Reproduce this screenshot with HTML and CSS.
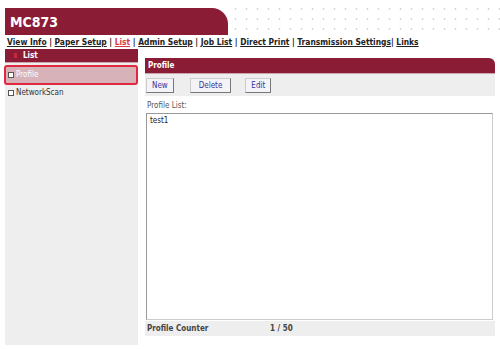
FILE: index.html
```html
<!DOCTYPE html>
<html lang="en">
<head>
  <meta charset="UTF-8">
  <title>MC873</title>
  <link rel="stylesheet" href="styles.css">
</head>
<body>
  <div class="top">
    <div class="banner">MC873</div>
    <div class="dots"></div>
  </div>

  <!-- menu -->
  <div class="nav">
    <a href="#">View Info</a> | <a href="#">Paper Setup</a> | <a href="#" class="cur">List</a> | <a href="#">Admin Setup</a> | <a href="#">Job List</a> | <a href="#">Direct Print</a> | <a href="#">Transmission Settings</a>| <a href="#">Links</a>
  </div>

  <div class="page">
    <div class="side">
      <div class="side-title"><span class="mark"></span>List</div>
      <div class="side-item selected"><span class="box"></span>Profile</div>
      <div class="side-item"><span class="box"></span>NetworkScan</div>
    </div>

    <div class="main">
      <div class="main-title">Profile</div>
      <div class="toolbar">
        <button>New</button>
        <button>Delete</button>
        <button>Edit</button>
      </div>
      <div class="label">Profile List:</div>
      <div class="listbox">
        <div>test1</div>
      </div>
      <div class="counter">
        <span class="c-name">Profile Counter</span>
        <span>1 / 50</span>
      </div>
    </div>
  </div>
</body>
</html>
```
FILE: styles.css
```css
body {
  margin: 0;
  font-family: 'DejaVu Sans Condensed', 'DejaVu Sans', Verdana, sans-serif;
  font-size: 8px;
  color: #333;
  background: #fff;
}

.top {
  display: flex;
  height: 35px;
}

.banner {
  width: 223px;
  height: 27px;
  margin: 8px 0 0 5px;
  background: #8b1c35;
  border-top-right-radius: 16px;
  color: #fff;
  font-size: 14px;
  font-weight: bold;
  line-height: 28px;
  padding-left: 5px;
  box-sizing: border-box;
}

.dots {
  flex: 1;
  margin: 4px 0 0 2px;
  background-image: radial-gradient(circle, #d6d6d6 0.8px, transparent 1.2px);
  background-size: 11px 10px;
}

.nav {
  padding: 2px 0 0 7px;
  height: 12px;
  font-weight: bold;
  font-size: 8.4px;
  color: #222;
  white-space: nowrap;
}

.nav a {
  color: #222;
  text-decoration: underline;
}

.nav a.cur {
  color: #d83a4a;
}

.page {
  display: flex;
}

.side {
  width: 133px;
  margin-left: 5px;
  height: 296px;
  background: #eeeeee;
}

.side-title {
  background: #8b1c35;
  color: #fff;
  font-weight: bold;
  height: 13px;
  line-height: 13px;
  padding-left: 9px;
  display: flex;
  align-items: center;
  border-bottom: 1px solid #c9a5ad;
}

.mark {
  width: 3px;
  height: 5px;
  background: #c8283c;
  margin-right: 6px;
}

.side-item {
  height: 16px;
  line-height: 16px;
  padding-left: 3px;
  display: flex;
  align-items: center;
  color: #333;
}

.side-item.selected {
  background: #d7b3b9;
  color: #fff;
  border: 2px solid #e0283e;
  border-radius: 3px;
  margin: 2px 0 0 -1px;
  padding-left: 2px;
}

.box {
  width: 4px;
  height: 4px;
  border: 1px solid #555;
  background: #fff;
  margin-right: 2px;
}

.main {
  width: 350px;
  margin: 9px 0 0 7px;
}

.main-title {
  background: #8b1c35;
  color: #fff;
  font-weight: bold;
  height: 15px;
  line-height: 15px;
  padding-left: 3px;
  border-top-right-radius: 6px;
  border-bottom: 1px solid #c9a5ad;
}

.toolbar {
  background: #eeeeee;
  height: 22px;
  display: flex;
  align-items: center;
  padding-left: 1px;
}

.toolbar button {
  font-family: 'DejaVu Sans Condensed', 'DejaVu Sans', sans-serif;
  font-size: 8px;
  color: #333399;
  background: #f4f4f8;
  border: 1px solid #ccc;
  border-right-color: #777;
  border-bottom-color: #777;
  height: 15px;
  padding: 0 5px;
  margin-right: 16px;
}

.toolbar button:nth-child(2) {
  padding: 0 8px;
  margin-right: 14px;
}

.label {
  padding: 5px 0 0 2px;
  height: 12px;
  color: #555;
}

.listbox {
  margin-left: 1px;
  width: 347px;
  height: 207px;
  border: 1px solid #999;
  border-right-color: #ccc;
  border-bottom-color: #ccc;
  padding: 2px 3px;
  box-sizing: border-box;
  color: #222;
}

.counter {
  background: #eeeeee;
  height: 15px;
  line-height: 15px;
  font-weight: bold;
  color: #444;
  display: flex;
  padding-left: 2px;
  margin-top: 1px;
}

.c-name {
  width: 123px;
}
```
